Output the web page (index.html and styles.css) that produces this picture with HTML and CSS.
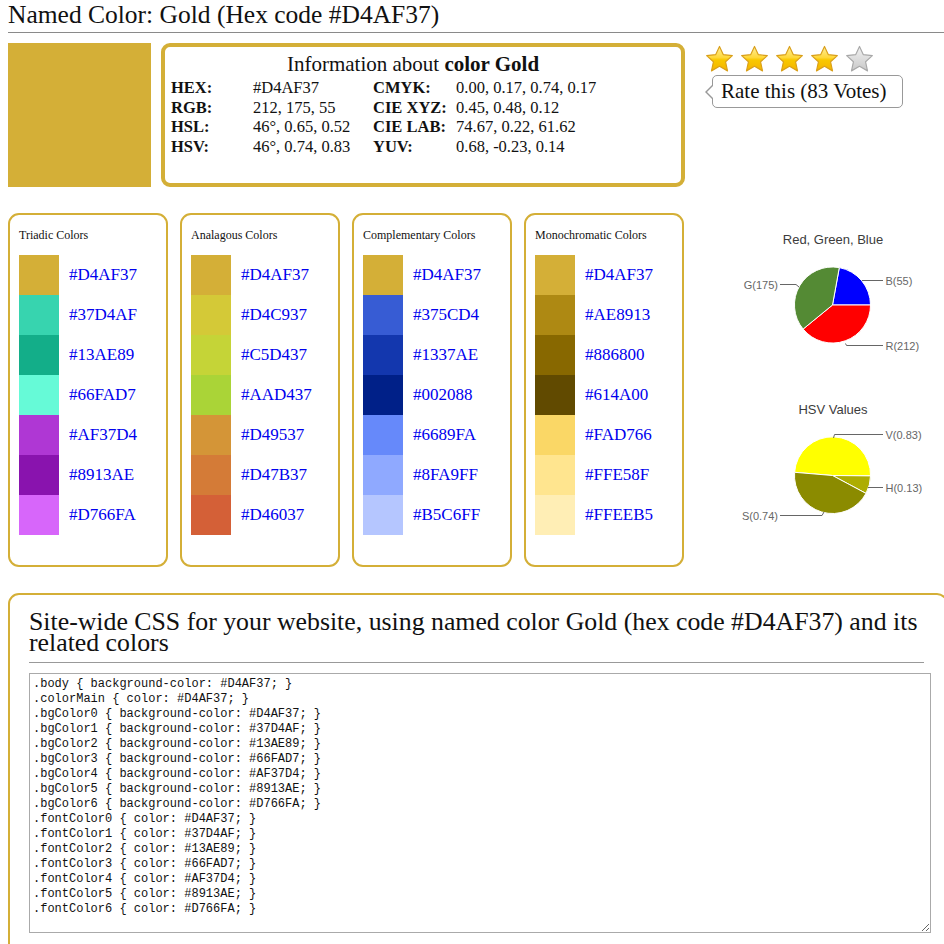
FILE: index.html
```html
<!DOCTYPE html>
<html>
<head>
<meta charset="utf-8">
<title>Named Color: Gold</title>
<link rel="stylesheet" href="styles.css">
</head>
<body>
<div class="page">
  <h1 class="title">Named Color: Gold (Hex code #D4AF37)</h1>

  <div class="top-row">
    <div class="main-swatch"></div>
    <div class="info-box">
      <div class="info-head">Information about <b>color Gold</b></div>
      <div class="info-grid">
        <span class="lbl">HEX:</span><span>#D4AF37</span><span class="lbl">CMYK:</span><span>0.00, 0.17, 0.74, 0.17</span>
        <span class="lbl">RGB:</span><span>212, 175, 55</span><span class="lbl">CIE XYZ:</span><span>0.45, 0.48, 0.12</span>
        <span class="lbl">HSL:</span><span>46°, 0.65, 0.52</span><span class="lbl">CIE LAB:</span><span>74.67, 0.22, 61.62</span>
        <span class="lbl">HSV:</span><span>46°, 0.74, 0.83</span><span class="lbl">YUV:</span><span>0.68, -0.23, 0.14</span>
      </div>
    </div>
    <div class="rating">
      <div class="stars">
        <svg class="star" viewBox="0 0 30 29"><defs><linearGradient id="gold" x1="0" y1="0" x2="0" y2="1"><stop offset="0" stop-color="#FFEFA0"/><stop offset="0.45" stop-color="#FFD83A"/><stop offset="0.55" stop-color="#F9C800"/><stop offset="1" stop-color="#F4B400"/></linearGradient><linearGradient id="grey" x1="0" y1="0" x2="0" y2="1"><stop offset="0" stop-color="#F2F2F2"/><stop offset="0.5" stop-color="#DDDDDD"/><stop offset="1" stop-color="#C8C8C8"/></linearGradient></defs><polygon points="15,1.5 19,10 28.3,11 21.3,17.4 23.3,26.8 15,22 6.7,26.8 8.7,17.4 1.7,11 11,10" fill="url(#gold)" stroke="#D99F1A" stroke-width="1.2" stroke-linejoin="round"/></svg>
        <svg class="star" viewBox="0 0 30 29"><polygon points="15,1.5 19,10 28.3,11 21.3,17.4 23.3,26.8 15,22 6.7,26.8 8.7,17.4 1.7,11 11,10" fill="url(#gold)" stroke="#D99F1A" stroke-width="1.2" stroke-linejoin="round"/></svg>
        <svg class="star" viewBox="0 0 30 29"><polygon points="15,1.5 19,10 28.3,11 21.3,17.4 23.3,26.8 15,22 6.7,26.8 8.7,17.4 1.7,11 11,10" fill="url(#gold)" stroke="#D99F1A" stroke-width="1.2" stroke-linejoin="round"/></svg>
        <svg class="star" viewBox="0 0 30 29"><polygon points="15,1.5 19,10 28.3,11 21.3,17.4 23.3,26.8 15,22 6.7,26.8 8.7,17.4 1.7,11 11,10" fill="url(#gold)" stroke="#D99F1A" stroke-width="1.2" stroke-linejoin="round"/></svg>
        <svg class="star" viewBox="0 0 30 29"><polygon points="15,1.5 19,10 28.3,11 21.3,17.4 23.3,26.8 15,22 6.7,26.8 8.7,17.4 1.7,11 11,10" fill="url(#grey)" stroke="#A8A8A8" stroke-width="1.2" stroke-linejoin="round"/></svg>
      </div>
      <div class="tip">Rate this (83 Votes)</div>
    </div>
  </div>

  <div class="palette-row">
    <div class="pal">
      <div class="pal-title">Triadic Colors</div>
      <div class="sw-row"><span class="sw" style="background:#D4AF37"></span><a class="hex">#D4AF37</a></div>
      <div class="sw-row"><span class="sw" style="background:#37D4AF"></span><a class="hex">#37D4AF</a></div>
      <div class="sw-row"><span class="sw" style="background:#13AE89"></span><a class="hex">#13AE89</a></div>
      <div class="sw-row"><span class="sw" style="background:#66FAD7"></span><a class="hex">#66FAD7</a></div>
      <div class="sw-row"><span class="sw" style="background:#AF37D4"></span><a class="hex">#AF37D4</a></div>
      <div class="sw-row"><span class="sw" style="background:#8913AE"></span><a class="hex">#8913AE</a></div>
      <div class="sw-row"><span class="sw" style="background:#D766FA"></span><a class="hex">#D766FA</a></div>
    </div>
    <div class="pal">
      <div class="pal-title">Analagous Colors</div>
      <div class="sw-row"><span class="sw" style="background:#D4AF37"></span><a class="hex">#D4AF37</a></div>
      <div class="sw-row"><span class="sw" style="background:#D4C937"></span><a class="hex">#D4C937</a></div>
      <div class="sw-row"><span class="sw" style="background:#C5D437"></span><a class="hex">#C5D437</a></div>
      <div class="sw-row"><span class="sw" style="background:#AAD437"></span><a class="hex">#AAD437</a></div>
      <div class="sw-row"><span class="sw" style="background:#D49537"></span><a class="hex">#D49537</a></div>
      <div class="sw-row"><span class="sw" style="background:#D47B37"></span><a class="hex">#D47B37</a></div>
      <div class="sw-row"><span class="sw" style="background:#D46037"></span><a class="hex">#D46037</a></div>
    </div>
    <div class="pal">
      <div class="pal-title">Complementary Colors</div>
      <div class="sw-row"><span class="sw" style="background:#D4AF37"></span><a class="hex">#D4AF37</a></div>
      <div class="sw-row"><span class="sw" style="background:#375CD4"></span><a class="hex">#375CD4</a></div>
      <div class="sw-row"><span class="sw" style="background:#1337AE"></span><a class="hex">#1337AE</a></div>
      <div class="sw-row"><span class="sw" style="background:#002088"></span><a class="hex">#002088</a></div>
      <div class="sw-row"><span class="sw" style="background:#6689FA"></span><a class="hex">#6689FA</a></div>
      <div class="sw-row"><span class="sw" style="background:#8FA9FF"></span><a class="hex">#8FA9FF</a></div>
      <div class="sw-row"><span class="sw" style="background:#B5C6FF"></span><a class="hex">#B5C6FF</a></div>
    </div>
    <div class="pal">
      <div class="pal-title">Monochromatic Colors</div>
      <div class="sw-row"><span class="sw" style="background:#D4AF37"></span><a class="hex">#D4AF37</a></div>
      <div class="sw-row"><span class="sw" style="background:#AE8913"></span><a class="hex">#AE8913</a></div>
      <div class="sw-row"><span class="sw" style="background:#886800"></span><a class="hex">#886800</a></div>
      <div class="sw-row"><span class="sw" style="background:#614A00"></span><a class="hex">#614A00</a></div>
      <div class="sw-row"><span class="sw" style="background:#FAD766"></span><a class="hex">#FAD766</a></div>
      <div class="sw-row"><span class="sw" style="background:#FFE58F"></span><a class="hex">#FFE58F</a></div>
      <div class="sw-row"><span class="sw" style="background:#FFEEB5"></span><a class="hex">#FFEEB5</a></div>
    </div>

    <div class="charts">
      <svg class="chart" viewBox="0 0 244 170" width="244" height="170">
        <text class="ch-title" x="133" y="30.5" text-anchor="middle">Red, Green, Blue</text>
        <path d="M132.5,92 L139.3,54.6 A38,38 0 0 1 170.5,92 Z" fill="#0000FF" stroke="#fff" stroke-width="1"/>
        <path d="M132.5,92 L170.5,92 A38,38 0 0 1 103.1,116.1 Z" fill="#FF0000" stroke="#fff" stroke-width="1"/>
        <path d="M132.5,92 L103.1,116.1 A38,38 0 0 1 139.3,54.6 Z" fill="#548A34" stroke="#fff" stroke-width="1"/>
        <path class="lead" d="M162,67.5 L183,67.5"/>
        <path class="lead" d="M80,71.5 L96,71.5 L99,74"/>
        <path class="lead" d="M145.5,130.5 L146.5,132.5 L183,132.5"/>
        <text class="ch-lbl" x="185.5" y="71.5">B(55)</text>
        <text class="ch-lbl" x="78" y="75.5" text-anchor="end">G(175)</text>
        <text class="ch-lbl" x="185.5" y="136.5">R(212)</text>
      </svg>
      <svg class="chart" viewBox="0 0 244 170" width="244" height="170">
        <text class="ch-title" x="133" y="30.5" text-anchor="middle">HSV Values</text>
        <path d="M132.5,92.5 L94.6,89.3 A38,38 0 0 1 170.5,92.9 Z" fill="#FFFF00" stroke="#fff" stroke-width="1"/>
        <path d="M132.5,92.5 L170.5,92.9 A38,38 0 0 1 166,110.4 Z" fill="#ADAD00" stroke="#fff" stroke-width="1"/>
        <path d="M132.5,92.5 L166,110.4 A38,38 0 0 1 94.6,89.3 Z" fill="#8B8B00" stroke="#fff" stroke-width="1"/>
        <path class="lead" d="M133.5,55 L134.5,51.5 L183,51.5"/>
        <path class="lead" d="M168,104.5 L183,104.5"/>
        <path class="lead" d="M80,132.5 L122,132.5 L124,129"/>
        <text class="ch-lbl" x="185.5" y="55.5">V(0.83)</text>
        <text class="ch-lbl" x="185.5" y="108.5">H(0.13)</text>
        <text class="ch-lbl" x="78" y="136.5" text-anchor="end">S(0.74)</text>
      </svg>
    </div>
  </div>

  <div class="css-box">
    <h2 class="css-head">Site-wide CSS for your website, using named color Gold (hex code #D4AF37) and its related colors</h2>
    <textarea class="css-code" spellcheck="false">.body { background-color: #D4AF37; }
.colorMain { color: #D4AF37; }
.bgColor0 { background-color: #D4AF37; }
.bgColor1 { background-color: #37D4AF; }
.bgColor2 { background-color: #13AE89; }
.bgColor3 { background-color: #66FAD7; }
.bgColor4 { background-color: #AF37D4; }
.bgColor5 { background-color: #8913AE; }
.bgColor6 { background-color: #D766FA; }
.fontColor0 { color: #D4AF37; }
.fontColor1 { color: #37D4AF; }
.fontColor2 { color: #13AE89; }
.fontColor3 { color: #66FAD7; }
.fontColor4 { color: #AF37D4; }
.fontColor5 { color: #8913AE; }
.fontColor6 { color: #D766FA; }</textarea>
  </div>
</div>
</body>
</html>
```

FILE: styles.css
```css
html, body {
  margin: 0;
  padding: 0;
  overflow: hidden;
  background: #fff;
}
body {
  font-family: "Liberation Serif", "Times New Roman", serif;
  color: #111;
}
.page {
  padding-left: 8px;
  width: 938px;
}
.title {
  margin: 0;
  font-size: 25.5px;
  font-weight: normal;
  line-height: 29px;
  padding-bottom: 3px;
  border-bottom: 1px solid #8a8a8a;
  color: #111;
}

/* top row */
.top-row {
  display: flex;
  align-items: flex-start;
  margin-top: 10px;
}
.main-swatch {
  width: 143px;
  height: 144px;
  background: #D4AF37;
  flex: none;
}
.info-box {
  margin-left: 10px;
  width: 516px;
  height: 136px;
  border: 4px solid #D4AF37;
  border-radius: 9px;
  flex: none;
}
.info-head {
  text-align: center;
  font-size: 21px;
  line-height: 24px;
  margin-top: 5px;
  padding-right: 20px;
}
.info-grid {
  display: grid;
  grid-template-columns: 82px 120px 83px auto;
  font-size: 16.5px;
  line-height: 19.5px;
  padding-left: 6px;
  margin-top: 2px;
}
.lbl {
  font-weight: bold;
}
.rating {
  margin-left: 20px;
  padding-top: 2px;
}
.stars {
  display: flex;
  gap: 6px;
}
.star {
  width: 29px;
  height: 28px;
  display: block;
}
.tip {
  position: relative;
  margin-left: 7px;
  margin-top: 2px;
  width: 181px;
  height: 31px;
  border: 1px solid #999;
  border-radius: 5px;
  font-size: 21px;
  line-height: 31px;
  padding-left: 8px;
  color: #111;
  background: #fff;
}
.tip::before {
  content: "";
  position: absolute;
  left: -8px;
  top: 8px;
  border-top: 8px solid transparent;
  border-bottom: 8px solid transparent;
  border-right: 8px solid #999;
}
.tip::after {
  content: "";
  position: absolute;
  left: -6px;
  top: 9px;
  border-top: 7px solid transparent;
  border-bottom: 7px solid transparent;
  border-right: 7px solid #fff;
}

/* palettes */
.palette-row {
  display: flex;
  align-items: flex-start;
  margin-top: 26px;
}
.pal {
  width: 147px;
  border: 2px solid #D4AF37;
  border-radius: 11px;
  padding: 13px 0 30px 9px;
  margin-right: 12px;
  flex: none;
}
.pal:nth-of-type(4) {
  margin-right: 0;
}
.pal-title {
  font-size: 12px;
  line-height: 14px;
  height: 14px;
  margin-bottom: 13px;
  white-space: nowrap;
}
.sw-row {
  display: flex;
  height: 40px;
  align-items: center;
}
.sw {
  width: 40px;
  height: 40px;
  flex: none;
}
.hex {
  margin-left: 10px;
  font-size: 17px;
  line-height: 40px;
  color: #0000EE;
}
.charts {
  margin-left: 16px;
  width: 244px;
  flex: none;
}
.chart {
  display: block;
}
.ch-title {
  font-family: "Liberation Sans", Arial, sans-serif;
  font-size: 13px;
  fill: #3c3c3c;
}
.ch-lbl {
  font-family: "Liberation Sans", Arial, sans-serif;
  font-size: 11px;
  fill: #666;
}
.lead {
  fill: none;
  stroke: #666;
  stroke-width: 1;
}

/* css section */
.css-box {
  margin-top: 26px;
  border: 2px solid #D4AF37;
  border-radius: 11px 11px 0 0;
  padding: 16px 13px 0 19px;
  width: 904px;
  height: 400px;
}
.css-head {
  margin: 0;
  font-weight: normal;
  font-size: 25.8px;
  line-height: 21px;
  padding-bottom: 9px;
  border-bottom: 1px solid #999;
  width: 895px;
  color: #111;
}
.css-code {
  display: block;
  margin-top: 10px;
  width: 894px;
  height: 252px;
  padding: 3px;
  border: 1px solid #aaa;
  font-family: "Liberation Mono", "Courier New", monospace;
  font-size: 12px;
  line-height: 15px;
  color: #111;
  resize: both;
  outline: none;
}
```
